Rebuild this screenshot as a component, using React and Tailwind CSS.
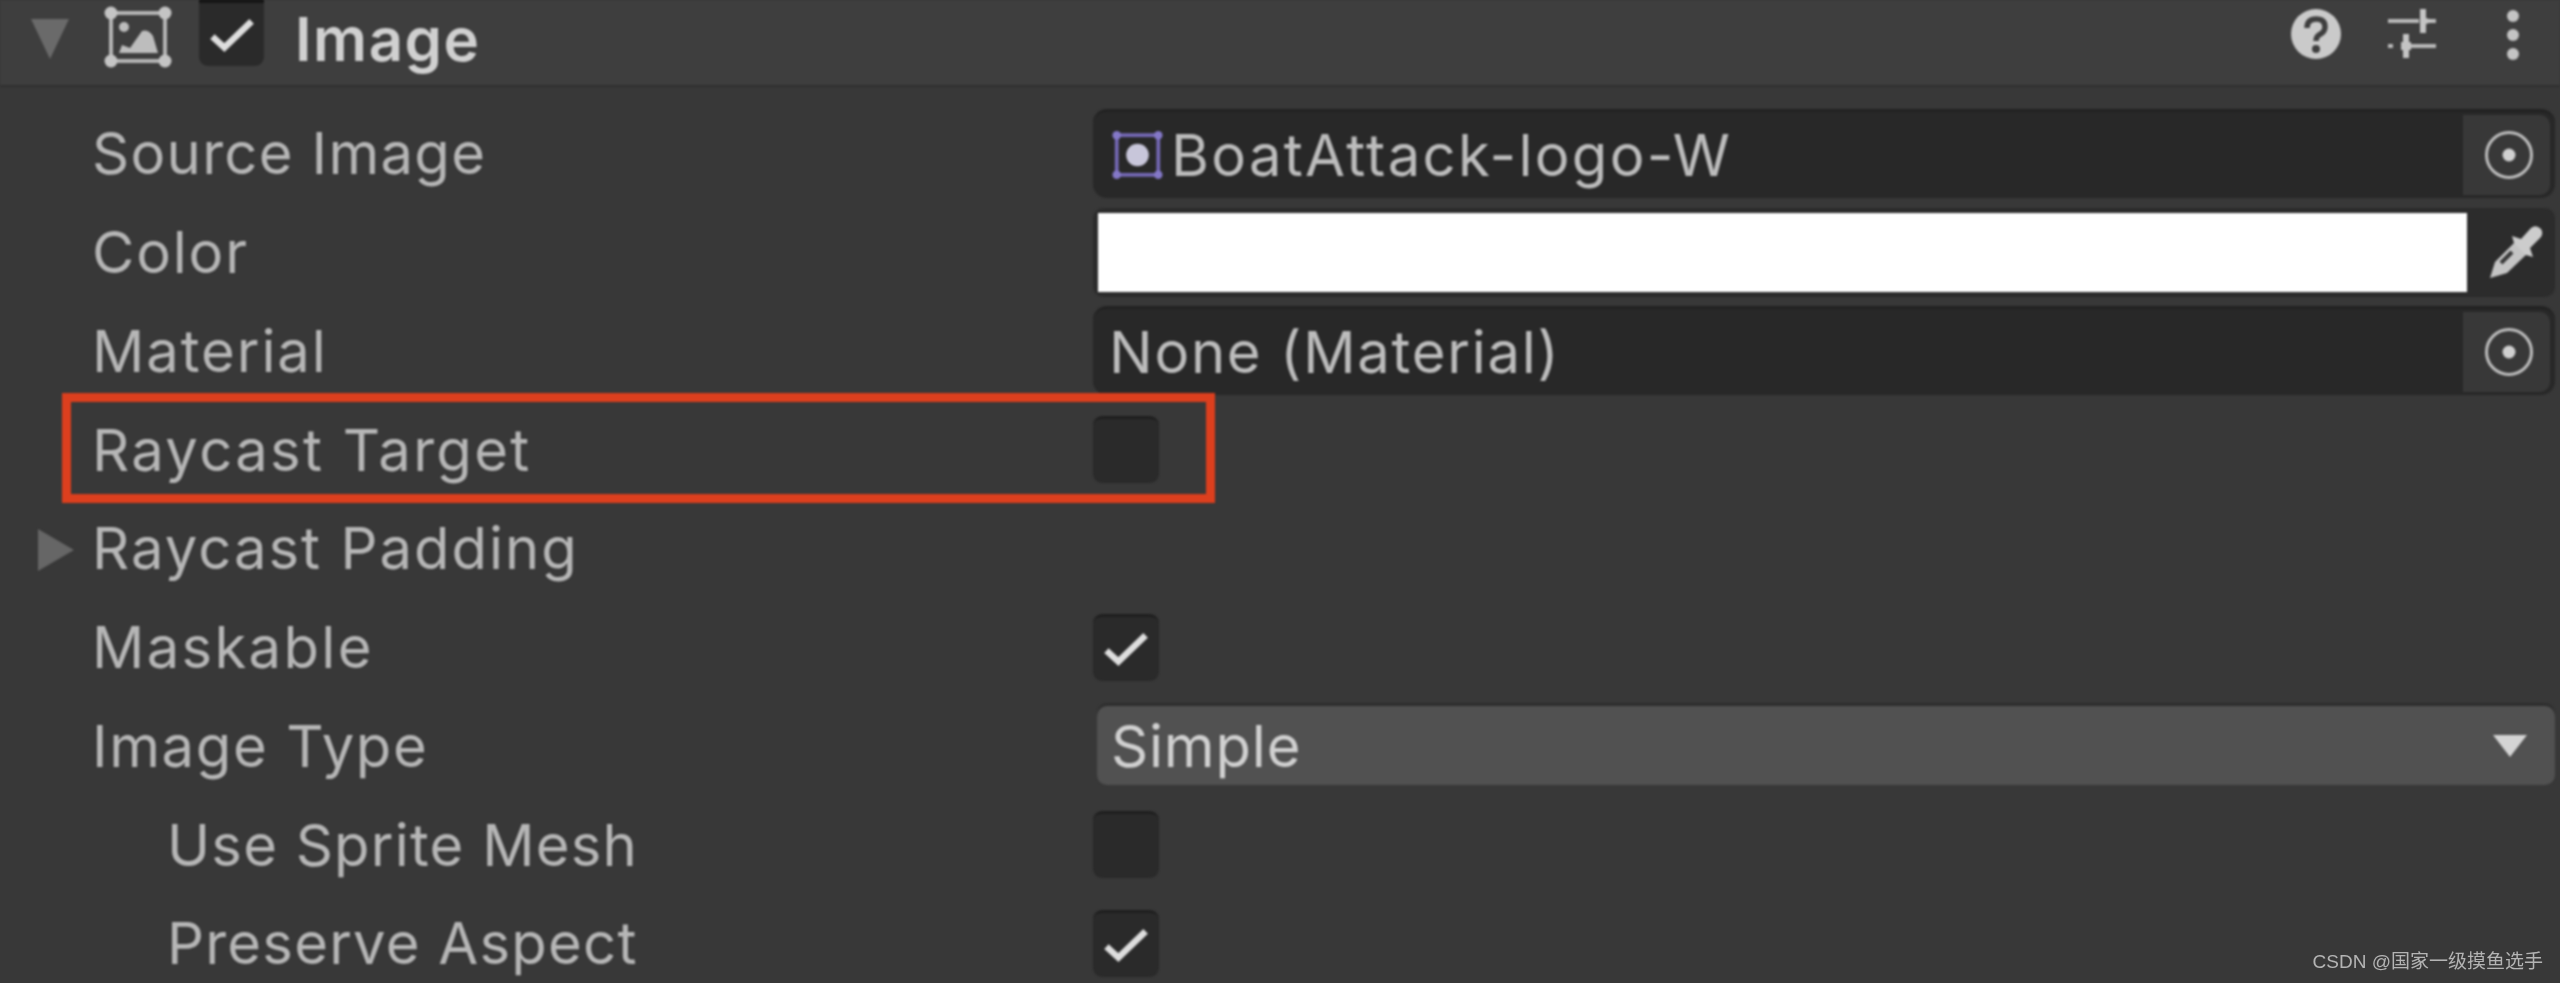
import React from "react";

const labelClass = "text-[58px] leading-none text-[#b6b6b6]";

const Check = () => (
  <svg viewBox="0 0 44 34" className="w-[48px] h-[37px]">
    <path d="M4 19 L15 29 L40 5" fill="none" stroke="#dedede" strokeWidth="6" />
  </svg>
);

const Toggle = ({ checked }) => (
  <div className="w-[66px] h-[67px] rounded-[9px] bg-[#2a2a2a] border-t-[3px] border-[#1f1f1f] flex items-center justify-center">
    {checked && <Check />}
  </div>
);

const TargetIcon = () => (
  <svg viewBox="0 0 50 50" className="w-[50px] h-[50px] ml-[5px]">
    <circle cx="25" cy="25" r="22.5" fill="none" stroke="#bdbdbd" strokeWidth="3" />
    <circle cx="25" cy="25" r="6.5" fill="#d0d0d0" />
  </svg>
);

const ObjectField = ({ children }) => (
  <div className="h-[89px] rounded-[14px] bg-[#282828] border-t-[3px] border-[#222222] flex items-center pl-[16px] pr-[5px]">
    <div className="flex-1 flex items-center min-w-0">{children}</div>
    <div className="w-[87px] h-[80px] bg-[#383838] rounded-r-[10px] flex items-center justify-center">
      <TargetIcon />
    </div>
  </div>
);

const SpriteIcon = () => (
  <svg viewBox="0 0 54 52" className="w-[51px] h-[50px] shrink-0 ml-[3px] mr-[8px]">
    <rect x="5" y="5" width="44" height="42" fill="none" stroke="#7468b4" strokeWidth="4" />
    <circle cx="5" cy="5" r="4.5" fill="#8478c8" />
    <circle cx="49" cy="5" r="4.5" fill="#8478c8" />
    <circle cx="5" cy="47" r="4.5" fill="#8478c8" />
    <circle cx="49" cy="47" r="4.5" fill="#8478c8" />
    <circle cx="27" cy="26" r="12" fill="#c8c6da" />
  </svg>
);

const PickerIcon = () => (
  <svg viewBox="0 0 56 56" className="w-[56px] h-[56px]">
    <path d="M2 54 L7 38 L29 16 L41 28 L19 49 Z" fill="#c4c4c4" />
    <path d="M13 39 L24 28" stroke="#383838" strokeWidth="4" />
    <path d="M24 12 L33 15 L43 4 Q48 0 53 5 Q56 10 52 14 L42 24 L45 33 L38 31 L26 19 Z" fill="#cccccc" />
  </svg>
);

const Row = ({ label, indent, arrow, outlined, spacing, children }) => (
  <div className="relative h-[98.75px] flex items-center">
    {arrow && (
      <svg viewBox="0 0 36 42" className="absolute left-[38px] top-[30px] w-[36px] h-[42px]">
        <path d="M0 0 L36 21 L0 42 Z" fill="#666666" />
      </svg>
    )}
    <div className={`w-[1093px] shrink-0 ${indent ? "pl-[167px]" : "pl-[92px]"} ${labelClass} ${spacing}`}>{label}</div>
    <div className="flex-1 min-w-0 pr-[5px]">{children}</div>
    {outlined && (
      <div className="absolute left-[62px] top-[-7px] w-[1153px] h-[110px] border-[9px] border-[#dc3f1e]" />
    )}
  </div>
);

const Header = () => (
  <div className="h-[87px] bg-[#3e3e3e] border-b-[2px] border-[#303030] flex items-center pl-[31px] pr-[40px]">
    <svg viewBox="0 0 38 40" className="w-[38px] h-[40px] shrink-0 mb-[8px]">
      <path d="M0 0 L38 0 L19 40 Z" fill="#6a6a6a" />
    </svg>
    <svg viewBox="0 0 68 62" className="w-[68px] h-[62px] shrink-0 ml-[35px] mb-[12px]">
      <rect x="7" y="7" width="54" height="48" fill="none" stroke="#b4b4b4" strokeWidth="4" />
      <circle cx="7" cy="7" r="6.5" fill="#c4c4c4" />
      <circle cx="61" cy="7" r="6.5" fill="#c4c4c4" />
      <circle cx="7" cy="55" r="6.5" fill="#c4c4c4" />
      <circle cx="61" cy="55" r="6.5" fill="#c4c4c4" />
      <circle cx="20" cy="21" r="5" fill="#bdbdbd" />
      <path d="M15 47 L18 39 L26 42 L38 25 Q44 23 49 30 L54 47 Z" fill="#bdbdbd" />
    </svg>
    <div className="w-[65px] h-[67px] shrink-0 ml-[27px] mb-[20px] rounded-b-[9px] bg-[#2a2a2a] border-t-[4px] border-[#151515] flex items-center justify-center">
      <Check />
    </div>
    <div className="ml-[31px] mb-[7px] text-[60px] leading-none font-semibold tracking-[1.5px] text-[#d0d0d0]">Image</div>

    <svg viewBox="0 0 50 50" className="w-[50px] h-[50px] ml-auto shrink-0 mb-[17px] mr-[-3px]">
      <circle cx="25" cy="25" r="25" fill="#cacaca" />
      <path d="M16 19 Q16 10 25 10 Q34 10 34 18 Q34 23 28 26 Q25 28 25 32" fill="none" stroke="#3e3e3e" strokeWidth="5.5" />
      <circle cx="25" cy="40" r="4" fill="#3e3e3e" />
    </svg>
    <svg viewBox="0 0 50 50" className="w-[50px] h-[50px] ml-[49px] shrink-0 mb-[17px]">
      <path d="M1 12 H32 M40 12 H49 M1 37 H6 M20 37 H49" stroke="#b8b8b8" strokeWidth="4" />
      <path d="M33 0 H39 V9 L48 12 L39 15 V24 H33 Z" fill="#c4c4c4" />
      <path d="M16 25 H22 V49 H16 Z M14 33 H24 V41 H14 Z" fill="#c4c4c4" />
    </svg>
    <svg viewBox="0 0 14 52" className="w-[14px] h-[52px] ml-[69px] shrink-0 mb-[16px]">
      <circle cx="7" cy="7" r="6" fill="#c4c4c4" />
      <circle cx="7" cy="26" r="6" fill="#c4c4c4" />
      <circle cx="7" cy="45" r="6" fill="#c4c4c4" />
    </svg>
  </div>
);

export default function App() {
  return (
    <div className="relative w-[2560px] h-[983px] overflow-hidden bg-[#383838] font-['Inter','Liberation_Sans',sans-serif]">
      <div className="blur-[1.2px]">
        <Header />
        <div className="pt-[17px]">
          <Row label="Source Image" spacing="tracking-[1.3px]">
            <ObjectField>
              <SpriteIcon />
              <span className="text-[58px] leading-none tracking-[2.3px] text-[#bcbcbc]">BoatAttack-logo-W</span>
            </ObjectField>
          </Row>
          <Row label="Color" spacing="tracking-[1.8px]">
            <div className="h-[89px] rounded-[10px] bg-[#2c2c2c] flex items-center pl-[5px] pr-[5px]">
              <div className="flex-1 h-[79px] bg-white" />
              <div className="w-[83px] flex items-center justify-center pl-[14px]">
                <PickerIcon />
              </div>
            </div>
          </Row>
          <Row label="Material" spacing="tracking-[1.9px]">
            <ObjectField>
              <span className="text-[58px] leading-none tracking-[1.7px] text-[#bcbcbc]">None (Material)</span>
            </ObjectField>
          </Row>
          <Row label="Raycast Target" outlined spacing="tracking-[2.3px]">
            <Toggle />
          </Row>
          <Row label="Raycast Padding" arrow spacing="tracking-[2px]" />
          <Row label="Maskable" spacing="tracking-[2.3px]">
            <Toggle checked />
          </Row>
          <Row label="Image Type" spacing="tracking-[1.6px]">
            <div className="ml-[4px] h-[79px] rounded-[10px] bg-[#515151] shadow-[0_-3px_0_#2e2e2e] flex items-center justify-between pl-[14px] pr-[28px]">
              <span className="text-[58px] leading-none tracking-[0.8px] text-[#d0d0d0]">Simple</span>
              <svg viewBox="0 0 34 22" className="w-[34px] h-[22px]">
                <path d="M0 0 H34 L17 22 Z" fill="#d4d4d4" />
              </svg>
            </div>
          </Row>
          <Row label="Use Sprite Mesh" indent spacing="tracking-[1.2px]">
            <Toggle />
          </Row>
          <Row label="Preserve Aspect" indent spacing="tracking-[1.2px]">
            <Toggle checked />
          </Row>
        </div>
      </div>
      <div className="absolute right-[17px] bottom-[9px] text-[19px] leading-[24px] text-[#b4b4b4] font-['Liberation_Sans','Noto_Sans_CJK_SC',sans-serif]">
        CSDN @国家一级摸鱼选手
      </div>
    </div>
  );
}
